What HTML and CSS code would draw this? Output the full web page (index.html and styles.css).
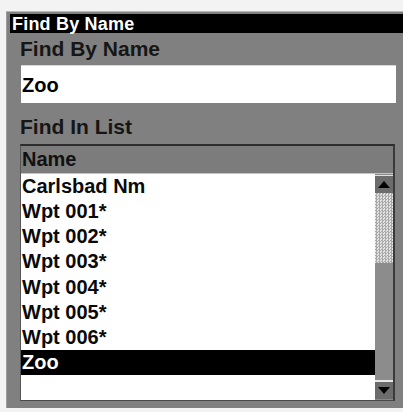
FILE: index.html
```html
<!DOCTYPE html>
<html>
<head>
<meta charset="utf-8">
<link rel="stylesheet" href="styles.css">
</head>
<body>
<div class="panel">
  <div class="titlebar">Find By Name</div>
  <div class="label first">Find By Name</div>
  <div class="input">Zoo</div>
  <div class="label second">Find In List</div>
  <div class="listbox">
    <div class="header">Name</div>
    <div class="body">
      <div class="rows">
        <div class="row">Carlsbad Nm</div>
        <div class="row">Wpt 001*</div>
        <div class="row">Wpt 002*</div>
        <div class="row">Wpt 003*</div>
        <div class="row">Wpt 004*</div>
        <div class="row">Wpt 005*</div>
        <div class="row">Wpt 006*</div>
        <div class="row selected">Zoo</div>
        <div class="row"></div>
      </div>
      <div class="scrollbar">
        <div class="btn up"><svg width="18" height="17" viewBox="0 0 18 17"><polygon points="3,12 15,12 9,5" fill="#000"/></svg></div>
        <div class="track"></div>
        <div class="thumb"></div>
        <div class="btn down"><svg width="18" height="17" viewBox="0 0 18 17"><polygon points="3,5 15,5 9,12" fill="#000"/></svg></div>
      </div>
    </div>
  </div>
</div>
</body>
</html>
```
FILE: styles.css
```css
html, body {
  margin: 0;
  padding: 0;
}
body {
  background: #f3f3f3;
  font-family: "Liberation Sans", Arial, sans-serif;
  font-weight: bold;
  width: 403px;
  height: 412px;
  overflow: hidden;
}
.panel {
  margin: 11px 0 0 6px;
  width: 397px;
  box-sizing: border-box;
  background: #808080;
  border-left: 1px solid #9c9c9c;
  border-top: 1px solid #b8b8b8;
  padding: 2px 0 7px 3px;
  display: flex;
  flex-direction: column;
}
.titlebar {
  background: #000;
  color: #fff;
  font-size: 18px;
  height: 19px;
  line-height: 20px;
  padding-left: 2px;
  letter-spacing: 0.2px;
}
.label {
  color: #161616;
  font-size: 21px;
  padding-left: 10px;
}
.label.first {
  height: 32px;
  line-height: 32px;
}
.label.second {
  height: 41px;
  box-sizing: border-box;
  padding-top: 7px;
  line-height: 34px;
}
.input {
  margin-left: 11px;
  width: 375px;
  height: 38px;
  box-sizing: border-box;
  background: #fff;
  border-top: 1px solid #d8d8d8;
  color: #000;
  font-size: 20px;
  line-height: 36px;
  padding: 1px 0 0 1px;
}
.listbox {
  margin-left: 10px;
  width: 375px;
  box-sizing: border-box;
  border-top: 2px solid #2c2c2c;
  border-left: 1px solid #555;
  border-right: 2px solid #3a3a3a;
  border-bottom: 1px solid #4a4a4a;
}
.header {
  height: 27px;
  line-height: 27px;
  font-size: 20px;
  color: #111;
  background: #7c7c7c;
  padding-left: 1px;
  border-bottom: 1px solid #c4c4c4;
}
.body {
  display: grid;
  grid-template-columns: 1fr 18px;
  background: #fff;
  height: 226px;
}
.rows {
  display: flex;
  flex-direction: column;
}
.row {
  height: 25.15px;
  line-height: 25.15px;
  font-size: 20px;
  color: #0a0a0a;
  padding-left: 1px;
  white-space: nowrap;
}
.row.selected {
  background: #000;
  color: #fff;
  height: 25px;
  line-height: 25px;
}
.scrollbar {
  display: flex;
  flex-direction: column;
  background: #8a8a8a;
}
.btn {
  height: 17px;
  background: #6c6c6c;
  display: flex;
  align-items: center;
  justify-content: center;
}
.btn svg {
  display: block;
}
.up {
  margin-top: 1px;
  border-top: 1px solid #e0e0e0;
}
.track {
  height: 70px;
  background-color: #d0d0d0;
  background-image: repeating-conic-gradient(#a8a8a8 0 25%, #e4e4e4 0 50%);
  background-size: 3px 3px;
}
.thumb {
  flex: 1;
  background: #8c8c8c;
  border-bottom: 2px solid #e8e8e8;
}
.down {
  margin-bottom: 1px;
}
```
